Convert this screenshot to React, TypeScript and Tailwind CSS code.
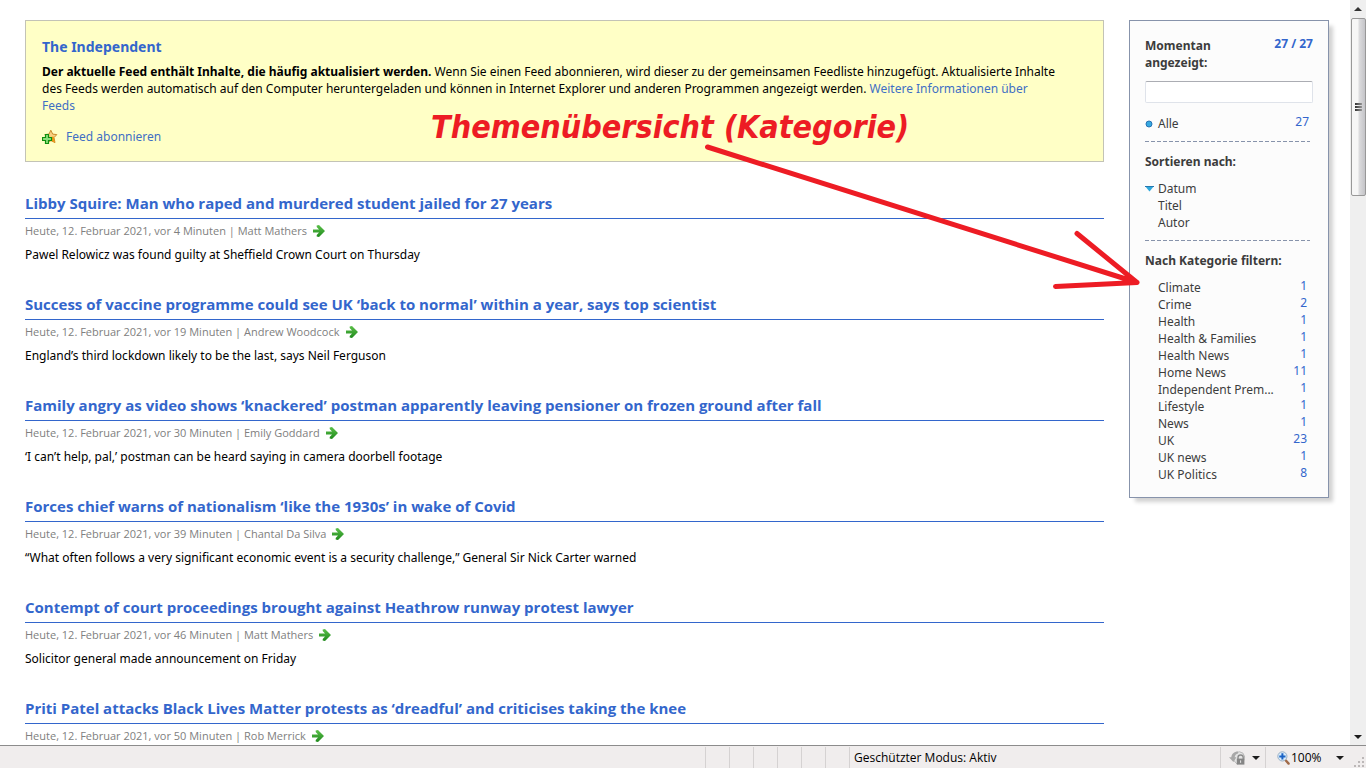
import React from 'react';

type Article = { title: string; meta: string; text: string };

const articles: Article[] = [
  {
    title: 'Libby Squire: Man who raped and murdered student jailed for 27 years',
    meta: 'Heute, 12. Februar 2021, vor 4 Minuten | Matt Mathers',
    text: 'Pawel Relowicz was found guilty at Sheffield Crown Court on Thursday',
  },
  {
    title: 'Success of vaccine programme could see UK ‘back to normal’ within a year, says top scientist',
    meta: 'Heute, 12. Februar 2021, vor 19 Minuten | Andrew Woodcock',
    text: 'England’s third lockdown likely to be the last, says Neil Ferguson',
  },
  {
    title: 'Family angry as video shows ‘knackered’ postman apparently leaving pensioner on frozen ground after fall',
    meta: 'Heute, 12. Februar 2021, vor 30 Minuten | Emily Goddard',
    text: '‘I can’t help, pal,’ postman can be heard saying in camera doorbell footage',
  },
  {
    title: 'Forces chief warns of nationalism ‘like the 1930s’ in wake of Covid',
    meta: 'Heute, 12. Februar 2021, vor 39 Minuten | Chantal Da Silva',
    text: '“What often follows a very significant economic event is a security challenge,” General Sir Nick Carter warned',
  },
  {
    title: 'Contempt of court proceedings brought against Heathrow runway protest lawyer',
    meta: 'Heute, 12. Februar 2021, vor 46 Minuten | Matt Mathers',
    text: 'Solicitor general made announcement on Friday',
  },
  {
    title: 'Priti Patel attacks Black Lives Matter protests as ‘dreadful’ and criticises taking the knee',
    meta: 'Heute, 12. Februar 2021, vor 50 Minuten | Rob Merrick',
    text: '',
  },
];

const categories: [string, number][] = [
  ['Climate', 1],
  ['Crime', 2],
  ['Health', 1],
  ['Health & Families', 1],
  ['Health News', 1],
  ['Home News', 11],
  ['Independent Prem...', 1],
  ['Lifestyle', 1],
  ['News', 1],
  ['UK', 23],
  ['UK news', 1],
  ['UK Politics', 8],
];

function GreenArrow() {
  return (
    <svg width="12" height="12" viewBox="0 0 12 12" aria-hidden="true">
      <defs>
        <linearGradient id="ga" x1="0" y1="0" x2="0" y2="1">
          <stop offset="0" stopColor="#5cc04a" />
          <stop offset="1" stopColor="#1f8a1c" />
        </linearGradient>
      </defs>
      <path d="M0 4.500H6L3.700 2V0.600L6 0 12 6 6 12 3.700 11.400V10L6 7.500H0Z" fill="url(#ga)" />
    </svg>
  );
}

function FeedStar() {
  return (
    <svg width="16" height="16" viewBox="0 0 16 16" aria-hidden="true">
      <path
        d="M8.8 1.2 10.7 5.1 14.8 5.6 12 8.6 13 13.6 9 11.6 5 13.6 5.6 8.6 2.8 5.6 7 5.1Z"
        fill="#f9d080"
        stroke="#c98a2b"
        strokeWidth="1"
      />
      <path d="M11.6 7.500 12.800 13.4 8.8 11.6 9 8Z" fill="#ee9a14" />
      <path
        d="M3.500 5.500H6.500V8.500H9.500V11.500H6.500V14.500H3.500V11.500H0.500V8.500H3.500Z"
        fill="#8be07c"
        stroke="#0f8f0f"
        strokeWidth="1.2"
      />
    </svg>
  );
}

function BlueDot() {
  return (
    <svg width="8" height="8" viewBox="0 0 8 8" aria-hidden="true">
      <circle cx="4" cy="4" r="3" fill="#36a9e0" stroke="#2672b4" />
    </svg>
  );
}

function BlueTriangle() {
  return (
    <svg width="9" height="6" viewBox="0 0 9 6" aria-hidden="true">
      <path d="M0 0H9L4.500 5.400Z" fill="#2fa8dc" />
      <path d="M0 0.500H9" stroke="#2477b0" />
    </svg>
  );
}

function Caret() {
  return (
    <svg width="8" height="4" viewBox="0 0 8 4" aria-hidden="true">
      <path d="M0 0H8L4 4Z" fill="#1c1c1c" />
    </svg>
  );
}

function ProtectIcon() {
  return (
    <svg width="17" height="16" viewBox="0 0 17 16" aria-hidden="true">
      <path d="M4 9.500A6.300 6.300 0 0 1 14 3.200 6.500 6.500 0 0 1 14.500 11L8 14Z" fill="#e4e4e4" stroke="#b8b8b8" />
      <path d="M9 1.400C5 1.400 2.600 4 2.300 7.300H0L4.400 12 7.400 7.300H5.600C6 5.200 7 3.800 9 3.400Z" fill="#a8a8a8" />
      <path d="M9 9V7.600a2.600 2.600 0 0 1 5.200 0V9" fill="none" stroke="#8c8c8c" strokeWidth="1.4" />
      <rect x="7.8" y="8.6" width="7.6" height="6" fill="#858585" />
      <path d="M11.600 10.400V12.800" stroke="#e8e8e8" />
    </svg>
  );
}

function ZoomIcon() {
  return (
    <svg width="13" height="14" viewBox="0 0 13 14" aria-hidden="true">
      <path d="M8.6 9.200 11.600 12.600" stroke="#a06a48" strokeWidth="2.4" strokeLinecap="round" />
      <circle cx="5.4" cy="5.4" r="4.6" fill="#d9ecfb" stroke="#98aec4" />
      <path d="M4.400 2.300H6.400V4.400H8.500V6.400H6.400V8.500H4.400V6.400H2.300V4.400H4.400Z" fill="#1b62c4" />
    </svg>
  );
}

function DashedRule() {
  return (
    <svg className="mr-1 block h-px w-[165px] max-w-full" aria-hidden="true">
      <line x1="0" y1="0.5" x2="100%" y2="0.5" stroke="#8793ab" strokeDasharray="4 2" />
    </svg>
  );
}

function FeedBox() {
  return (
    <section className="border border-[#c3c3b6] bg-[#ffffc6] py-4 pr-[45px] pl-4">
      <h1 className="text-[14px] leading-5 font-bold text-[#3366cc]">The Independent</h1>
      <p className="mt-[6px] leading-[17px]">
        <strong>Der aktuelle Feed enthält Inhalte, die häufig aktualisiert werden.</strong> Wenn Sie einen Feed
        abonnieren, wird dieser zu der gemeinsamen Feedliste hinzugefügt. Aktualisierte Inhalte des Feeds werden
        automatisch auf den Computer heruntergeladen und können in Internet Explorer und anderen Programmen angezeigt
        werden.{' '}
        <a href="#info" className="text-[#3f6fc4]">
          Weitere Informationen über Feeds
        </a>
      </p>
      <a href="#abo" className="mt-[15px] flex items-center gap-2 leading-4 text-[#3f6fc4]">
        <FeedStar />
        Feed abonnieren
      </a>
    </section>
  );
}

function FilterPanel() {
  return (
    <aside className="w-[200px] shrink-0 border border-[#8793ab] bg-[#fcfcfc] px-[15px] pt-4 pb-[14px] leading-[17px] text-[#3c3c3c] shadow-[5px_5px_4px_-1px_rgba(0,0,0,0.18)]">
      <div className="flex items-start justify-between">
        <label htmlFor="search" className="w-24 font-bold">
          Momentan angezeigt:
        </label>
        <span className="leading-[14px] font-bold text-[#3366cc]">27 / 27</span>
      </div>
      <input
        id="search"
        type="text"
        className="mt-[10px] block h-[22px] w-full rounded-[2px] border border-[#dfe3ea] border-t-[#abadb3] bg-white px-1 outline-none"
      />
      <button type="button" className="mt-3 flex w-full items-start gap-[5px] pr-1 text-left">
        <span className="flex h-[17px] items-center">
          <BlueDot />
        </span>
        <span className="flex-1">Alle</span>
        <span className="leading-[14px] text-[#3366cc]">27</span>
      </button>
      <div className="mt-[9px]">
        <DashedRule />
      </div>
      <h2 className="mt-[11px] font-bold">Sortieren nach:</h2>
      <ul className="mt-[10px]">
        {['Datum', 'Titel', 'Autor'].map((name, i) => (
          <li key={name}>
            <button type="button" className="flex w-full items-center gap-1 text-left">
              <span className="w-[9px]">{i === 0 && <BlueTriangle />}</span>
              {name}
            </button>
          </li>
        ))}
      </ul>
      <div className="mt-[9px]">
        <DashedRule />
      </div>
      <h2 className="mt-[11px] font-bold">Nach Kategorie filtern:</h2>
      <ul className="mt-[10px]">
        {categories.map(([name, count]) => (
          <li key={name}>
            <button type="button" className="flex w-full items-start justify-between pr-[6px] pl-[13px] text-left">
              <span className="whitespace-nowrap">{name}</span>
              <span className="leading-[14px] text-[#3366cc]">{count}</span>
            </button>
          </li>
        ))}
      </ul>
    </aside>
  );
}

function ScrollBar() {
  return (
    <div className="flex w-4 shrink-0 flex-col items-center bg-[#efefef]" aria-hidden="true">
      <div className="flex h-[18px] shrink-0 items-center">
        <svg width="8" height="4" viewBox="0 0 8 4">
          <path d="M0 4H8L4 0Z" fill="#333" />
        </svg>
      </div>
      <div className="flex h-[178px] w-[15px] shrink-0 flex-col items-center justify-center rounded-[2px] border border-[#989898] bg-linear-to-r from-[#f6f6f6] from-45% via-[#dcdcde] via-55% to-[#c4c4c8]">
        <div className="flex flex-col gap-px">
          <span className="h-[2px] w-[7px] bg-linear-to-r from-[#333] to-[#999]" />
          <span className="h-[2px] w-[7px] bg-linear-to-r from-[#333] to-[#999]" />
          <span className="h-[2px] w-[7px] bg-linear-to-r from-[#333] to-[#999]" />
        </div>
      </div>
      <div className="mt-auto flex h-[17px] items-center">
        <Caret />
      </div>
    </div>
  );
}

function StatusBar() {
  return (
    <footer className="flex h-[23px] shrink-0 items-stretch border-t border-[#8c8c8c] bg-[#f0eded] pt-px font-['Open_Sans','Noto_Sans',sans-serif] text-black">
      <div className="flex-1" />
      {[0, 1, 2, 3, 4, 5].map((n) => (
        <div key={n} className="w-6 border-l border-[#d5d2d2]" />
      ))}
      <div className="flex w-[371px] items-center border-l border-[#d5d2d2] pl-1">Geschützter Modus: Aktiv</div>
      <button
        type="button"
        className="flex w-[45px] items-center gap-[6px] border-l border-[#d5d2d2] pl-2"
        aria-label="Schutz"
      >
        <ProtectIcon />
        <Caret />
      </button>
      <button type="button" className="flex w-[101px] items-center border-l border-[#d5d2d2] pl-[11px]">
        <ZoomIcon />
        <span className="ml-px w-[45px] text-left">100%</span>
        <Caret />
        <svg className="mt-auto ml-auto" width="12" height="12" viewBox="0 0 12 12" aria-hidden="true">
          <path d="M8 1h2v2h-2zM8 5h2v2h-2zM4 5h2v2h-2zM8 9h2v2h-2zM4 9h2v2h-2zM0 9h2v2h-2z" fill="#bcb8b8" />
        </svg>
      </button>
    </footer>
  );
}

function Annotation() {
  return (
    <>
      <div className="pointer-events-none absolute top-[107px] left-[431px] font-['DejaVu_Sans_Condensed','DejaVu_Sans',sans-serif] text-[32px] leading-10 font-bold whitespace-nowrap text-[#ed1c24] italic">
        Themenübersicht (Kategorie)
      </div>
      <svg
        className="pointer-events-none absolute top-[140px] left-[700px]"
        width="450"
        height="160"
        viewBox="700 140 450 160"
        aria-hidden="true"
      >
        <path
          d="M707.500 147 1137 282.500M1077 233.500 1137 282.500 1055.500 286.500"
          fill="none"
          stroke="#ed1c24"
          strokeWidth="5"
          strokeLinecap="round"
          strokeLinejoin="round"
        />
      </svg>
    </>
  );
}

export default function App() {
  return (
    <div className="relative flex h-screen flex-col overflow-hidden bg-white font-['Noto_Sans','Open_Sans',sans-serif] text-[12px] text-black">
      <div className="flex min-h-0 flex-1">
        <div className="flex min-w-0 flex-1 items-start gap-[25px] overflow-hidden pt-5 pr-[21px] pl-[25px]">
          <main className="flex min-w-0 flex-1 flex-col gap-[31px]">
            <FeedBox />
            {articles.map((a) => (
              <article key={a.title}>
                <h2 className="border-b border-[#3366cc] pb-[5px] font-['Open_Sans','Noto_Sans',sans-serif] text-[15px] leading-5 font-bold whitespace-nowrap">
                  <a href="#artikel" className="text-[#3366cc]">
                    {a.title}
                  </a>
                </h2>
                <div className="mt-1 flex items-center gap-[6px] font-['Open_Sans','Noto_Sans',sans-serif] text-[11px] leading-4 text-[#808080]">
                  {a.meta}
                  <GreenArrow />
                </div>
                <p className="mt-[7px] leading-[17px]">{a.text}</p>
              </article>
            ))}
          </main>
          <FilterPanel />
        </div>
        <ScrollBar />
      </div>
      <StatusBar />
      <Annotation />
    </div>
  );
}
